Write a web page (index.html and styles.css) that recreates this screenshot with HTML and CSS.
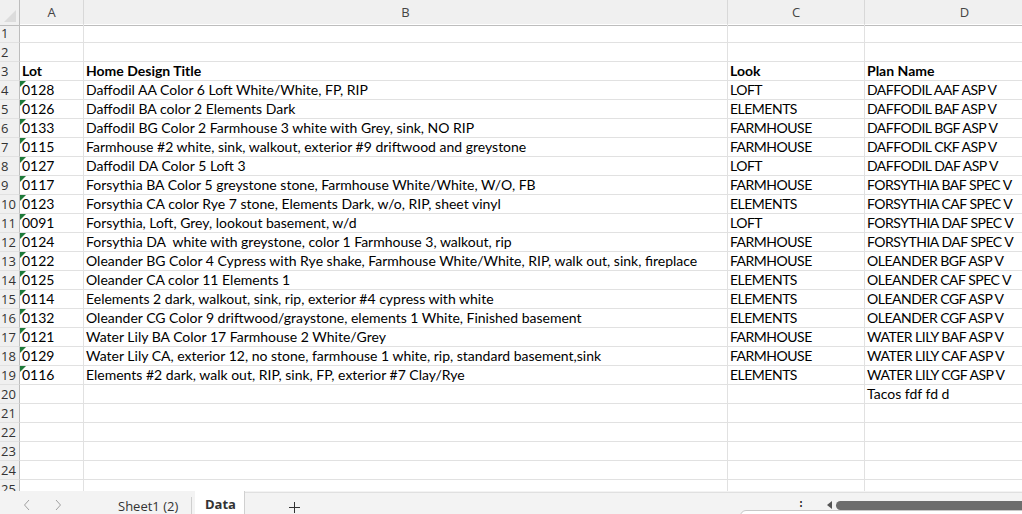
FILE: index.html
```html
<html>

<head>
  <title>Lots - Data</title>
  <link rel="stylesheet" href="styles.css">
</head>

<body>

  <div class="sheet">
    <div class="row head">
      <div class="corner"><span class="corner-mark"></span></div>
      <div class="col">A</div>
      <div class="col">B</div>
      <div class="col">C</div>
      <div class="col">D</div>
    </div>

    <div class="row"><div class="num">1</div><div class="cell"></div><div class="cell"></div><div class="cell"></div><div class="cell"></div></div>
    <div class="row"><div class="num">2</div><div class="cell"></div><div class="cell"></div><div class="cell"></div><div class="cell"></div></div>
    <div class="row bold"><div class="num">3</div><div class="cell">Lot</div><div class="cell">Home Design Title</div><div class="cell">Look</div><div class="cell">Plan Name</div></div>
    <div class="row"><div class="num">4</div><div class="cell flag">0128</div><div class="cell">Daffodil AA Color 6 Loft White/White, FP, RIP</div><div class="cell">LOFT</div><div class="cell">DAFFODIL AAF ASP V</div></div>
    <div class="row"><div class="num">5</div><div class="cell flag">0126</div><div class="cell">Daffodil BA color 2 Elements Dark</div><div class="cell">ELEMENTS</div><div class="cell">DAFFODIL BAF ASP V</div></div>
    <div class="row"><div class="num">6</div><div class="cell flag">0133</div><div class="cell">Daffodil BG Color 2 Farmhouse 3 white with Grey, sink, NO RIP</div><div class="cell">FARMHOUSE</div><div class="cell">DAFFODIL BGF ASP V</div></div>
    <div class="row"><div class="num">7</div><div class="cell flag">0115</div><div class="cell">Farmhouse #2 white, sink, walkout, exterior #9 driftwood and greystone</div><div class="cell">FARMHOUSE</div><div class="cell">DAFFODIL CKF ASP V</div></div>
    <div class="row"><div class="num">8</div><div class="cell flag">0127</div><div class="cell">Daffodil DA Color 5 Loft 3</div><div class="cell">LOFT</div><div class="cell">DAFFODIL DAF ASP V</div></div>
    <div class="row"><div class="num">9</div><div class="cell flag">0117</div><div class="cell">Forsythia BA Color 5 greystone stone, Farmhouse White/White, W/O, FB</div><div class="cell">FARMHOUSE</div><div class="cell">FORSYTHIA BAF SPEC V</div></div>
    <div class="row"><div class="num">10</div><div class="cell flag">0123</div><div class="cell">Forsythia CA color Rye 7 stone, Elements Dark, w/o, RIP, sheet vinyl</div><div class="cell">ELEMENTS</div><div class="cell">FORSYTHIA CAF SPEC V</div></div>
    <div class="row"><div class="num">11</div><div class="cell flag">0091</div><div class="cell">Forsythia, Loft, Grey, lookout basement, w/d</div><div class="cell">LOFT</div><div class="cell">FORSYTHIA DAF SPEC V</div></div>
    <div class="row"><div class="num">12</div><div class="cell flag">0124</div><div class="cell">Forsythia DA&nbsp; white with greystone, color 1 Farmhouse 3, walkout, rip</div><div class="cell">FARMHOUSE</div><div class="cell">FORSYTHIA DAF SPEC V</div></div>
    <div class="row"><div class="num">13</div><div class="cell flag">0122</div><div class="cell">Oleander BG Color 4 Cypress with Rye shake, Farmhouse White/White, RIP, walk out, sink, fireplace</div><div class="cell">FARMHOUSE</div><div class="cell">OLEANDER BGF ASP V</div></div>
    <div class="row"><div class="num">14</div><div class="cell flag">0125</div><div class="cell">Oleander CA color 11 Elements 1</div><div class="cell">ELEMENTS</div><div class="cell">OLEANDER CAF SPEC V</div></div>
    <div class="row"><div class="num">15</div><div class="cell flag">0114</div><div class="cell">Eelements 2 dark, walkout, sink, rip, exterior #4 cypress with white</div><div class="cell">ELEMENTS</div><div class="cell">OLEANDER CGF ASP V</div></div>
    <div class="row"><div class="num">16</div><div class="cell flag">0132</div><div class="cell">Oleander CG Color 9 driftwood/graystone, elements 1 White, Finished basement</div><div class="cell">ELEMENTS</div><div class="cell">OLEANDER CGF ASP V</div></div>
    <div class="row"><div class="num">17</div><div class="cell flag">0121</div><div class="cell">Water Lily BA Color 17 Farmhouse 2 White/Grey</div><div class="cell">FARMHOUSE</div><div class="cell">WATER LILY BAF ASP V</div></div>
    <div class="row"><div class="num">18</div><div class="cell flag">0129</div><div class="cell">Water Lily CA, exterior 12, no stone, farmhouse 1 white, rip, standard basement,sink</div><div class="cell">FARMHOUSE</div><div class="cell">WATER LILY CAF ASP V</div></div>
    <div class="row"><div class="num">19</div><div class="cell flag">0116</div><div class="cell">Elements #2 dark, walk out, RIP, sink, FP, exterior #7 Clay/Rye</div><div class="cell">ELEMENTS</div><div class="cell">WATER LILY CGF ASP V</div></div>
    <div class="row"><div class="num">20</div><div class="cell"></div><div class="cell"></div><div class="cell"></div><div class="cell plain">Tacos fdf fd d</div></div>
    <div class="row"><div class="num">21</div><div class="cell"></div><div class="cell"></div><div class="cell"></div><div class="cell"></div></div>
    <div class="row"><div class="num">22</div><div class="cell"></div><div class="cell"></div><div class="cell"></div><div class="cell"></div></div>
    <div class="row"><div class="num">23</div><div class="cell"></div><div class="cell"></div><div class="cell"></div><div class="cell"></div></div>
    <div class="row"><div class="num">24</div><div class="cell"></div><div class="cell"></div><div class="cell"></div><div class="cell"></div></div>
    <div class="row"><div class="num">25</div><div class="cell"></div><div class="cell"></div><div class="cell"></div><div class="cell"></div></div>
  </div>

  <div class="tabbar">
    <div class="nav">
      <svg width="10" height="12" viewBox="0 0 10 12"><path d="M7 1 L2.5 6 L7 11" fill="none" stroke="#a0a0a0" stroke-width="1"/></svg>
      <svg width="10" height="12" viewBox="0 0 10 12"><path d="M3 1 L7.5 6 L3 11" fill="none" stroke="#a0a0a0" stroke-width="1"/></svg>
    </div>
    <div class="tab">Sheet1 (2)</div>
    <div class="tab active">Data</div>
    <div class="tail">
      <div class="add">
        <svg width="11" height="11" viewBox="0 0 11 11"><path d="M5.5 0 V11 M0 5.5 H11" stroke="#333" stroke-width="1"/></svg>
      </div>
      <div class="scroll">
        <span class="dots">&#8942;</span>
        <span class="arrow"></span>
        <span class="thumb"></span>
      </div>
    </div>
    <div class="popup"></div>
  </div>

</body>

</html>
```

FILE: styles.css
```css
:root {
  --grid: #e1e1e1;
  --head: #f0f0f0;
  --head-line: #bdbdbd;
  --text: #000;
}

* {
  margin: 0;
  padding: 0;
  box-sizing: border-box;
}

body {
  width: 1022px;
  height: 514px;
  overflow: hidden;
  background: #fff;
  font-family: "Lato", sans-serif;
}

.sheet {
  height: 491px;
  overflow: hidden;
}

.row {
  display: grid;
  grid-template-columns: 20px 64px 644px 137px 200px;
  height: 19px;
}

.head {
  height: 24px;
  background: var(--head);
}

.corner,
.col {
  border-bottom: 1px solid var(--head-line);
  border-right: 1px solid #d8d8d8;
  position: relative;
}

.corner {
  border-right-color: var(--head-line);
}

.corner-mark {
  position: absolute;
  right: 3px;
  bottom: 3px;
  width: 0;
  height: 0;
  border-left: 12px solid transparent;
  border-bottom: 12px solid #dcdcdc;
}

.col {
  font-family: "Open Sans", sans-serif;
  font-size: 13px;
  color: #444;
  text-align: center;
  line-height: 25px;
}

.num {
  background: var(--head);
  border-right: 1px solid var(--head-line);
  border-bottom: 1px solid var(--grid);
  font-family: "Open Sans", sans-serif;
  font-size: 13px;
  color: #333;
  line-height: 18px;
  padding-left: 1px;
  overflow: hidden;
}

.cell {
  position: relative;
  border-right: 1px solid var(--grid);
  border-bottom: 1px solid var(--grid);
  font-size: 14px;
  line-height: 18px;
  padding-left: 2px;
  color: var(--text);
  white-space: nowrap;
  overflow: visible;
}

/* caps columns (Look, Plan Name) run narrower in the original font */
.cell:nth-child(4),
.cell:nth-child(5) {
  letter-spacing: -0.5px;
}

.bold .cell {
  font-weight: bold;
  letter-spacing: 0;
}

.cell.plain {
  letter-spacing: 0;
}

.flag::before {
  content: "";
  position: absolute;
  left: 0;
  top: 0;
  border-top: 6px solid #1e7b3a;
  border-right: 6px solid transparent;
}

.tabbar {
  position: relative;
  height: 23px;
  display: flex;
  background: #f3f3f3;
  font-family: "Open Sans", sans-serif;
  font-size: 13px;
  color: #333;
}

.nav {
  width: 100px;
  display: flex;
  gap: 21px;
  padding: 5px 0 0 22px;
  align-items: center;
}

.tab {
  width: 92px;
  height: 17px;
  margin-top: 6px;
  padding-left: 18px;
  line-height: 18px;
  border-right: 1px solid #cfcfcf;
  white-space: nowrap;
}

.tab.active {
  width: 50px;
  height: 23px;
  margin: 0 0 0 3px;
  padding-left: 10px;
  background: #fff;
  font-weight: bold;
  line-height: 27px;
  border-right: 1px solid #d0d0d0;
}

.tail {
  flex: 1;
  display: flex;
  border-top: 1px solid #e0e0e0;
  margin-top: 1px;
}

.add {
  width: 100px;
  padding-left: 44px;
  padding-top: 9px;
}

.scroll {
  flex: 1;
  display: flex;
  align-items: center;
  justify-content: flex-end;
  padding-top: 3px;
}

.dots {
  font-size: 14px;
  color: #222;
  margin-right: 19px;
}

.arrow {
  width: 0;
  height: 0;
  border-top: 4px solid transparent;
  border-bottom: 4px solid transparent;
  border-right: 5px solid #555;
  margin-right: 4px;
}

.thumb {
  width: 186px;
  height: 9px;
  border-radius: 5px 0 0 5px;
  background: #6d6d6d;
}

.popup {
  position: absolute;
  left: 740px;
  top: 19px;
  width: 300px;
  height: 20px;
  background: #fff;
  border: 1px solid #c8c8c8;
  border-radius: 6px;
}
```
